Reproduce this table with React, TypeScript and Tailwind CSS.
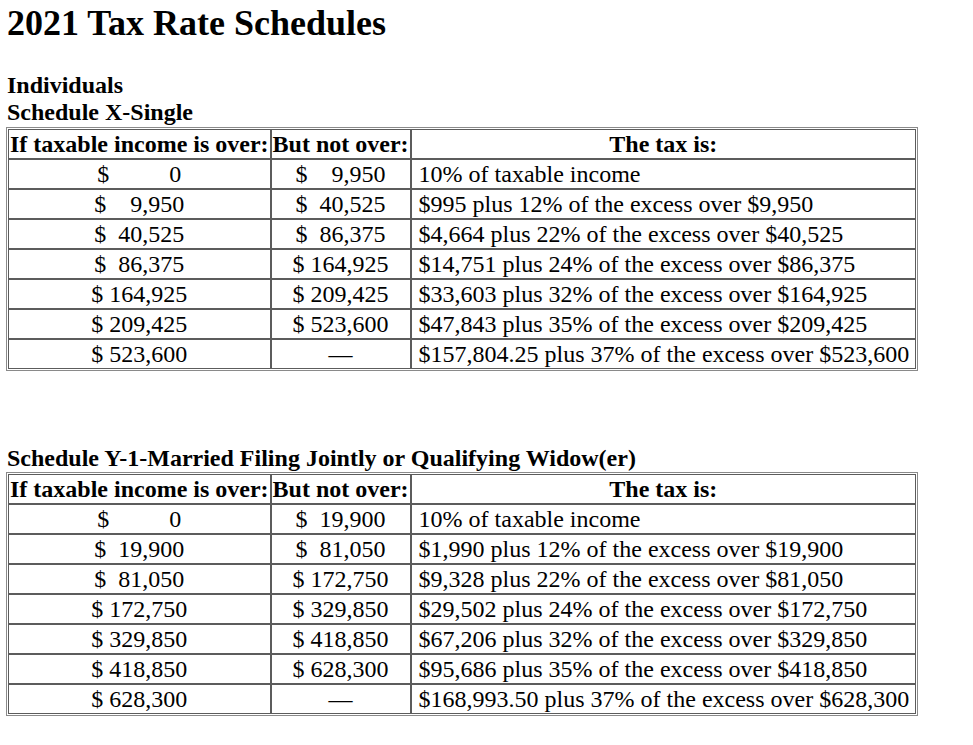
const sp = (n: number) => '\u00a0'.repeat(n);

type Row = [string, string, string];

const single: Row[] = [
  ['$' + sp(10) + '0', '$' + sp(4) + '9,950', '10% of taxable income'],
  ['$' + sp(4) + '9,950', '$' + sp(2) + '40,525', '$995 plus 12% of the excess over $9,950'],
  ['$' + sp(2) + '40,525', '$' + sp(2) + '86,375', '$4,664 plus 22% of the excess over $40,525'],
  ['$' + sp(2) + '86,375', '$ 164,925', '$14,751 plus 24% of the excess over $86,375'],
  ['$ 164,925', '$ 209,425', '$33,603 plus 32% of the excess over $164,925'],
  ['$ 209,425', '$ 523,600', '$47,843 plus 35% of the excess over $209,425'],
  ['$ 523,600', '—', '$157,804.25 plus 37% of the excess over $523,600'],
];

const joint: Row[] = [
  ['$' + sp(10) + '0', '$' + sp(2) + '19,900', '10% of taxable income'],
  ['$' + sp(2) + '19,900', '$' + sp(2) + '81,050', '$1,990 plus 12% of the excess over $19,900'],
  ['$' + sp(2) + '81,050', '$ 172,750', '$9,328 plus 22% of the excess over $81,050'],
  ['$ 172,750', '$ 329,850', '$29,502 plus 24% of the excess over $172,750'],
  ['$ 329,850', '$ 418,850', '$67,206 plus 32% of the excess over $329,850'],
  ['$ 418,850', '$ 628,300', '$95,686 plus 35% of the excess over $418,850'],
  ['$ 628,300', '—', '$168,993.50 plus 37% of the excess over $628,300'],
];

function ScheduleTable({ rows }: { rows: Row[] }) {
  const cell = 'border border-[#5c5c5c] p-px leading-[26px] whitespace-nowrap';
  return (
    <table className="w-[912px] border-separate border-spacing-0 border border-[#8a8a8a] p-px">
      <thead>
        <tr>
          <th className={`${cell} w-[261px] font-bold text-center`}>If taxable income is over:</th>
          <th className={`${cell} w-[139px] font-bold text-center`}>But not over:</th>
          <th className={`${cell} font-bold text-center`}>The tax is:</th>
        </tr>
      </thead>
      <tbody>
        {rows.map((r, i) => (
          <tr key={i}>
            <td className={`${cell} text-center`}>{r[0]}</td>
            <td className={`${cell} text-center`}>{r[1]}</td>
            <td className={`${cell} text-left pl-[7px]`}>{r[2]}</td>
          </tr>
        ))}
      </tbody>
    </table>
  );
}

export default function App() {
  return (
    <div className="min-h-screen bg-white text-black pl-[6px] pt-[3px] font-['Liberation_Serif','Times_New_Roman',serif] text-[24px]">
      <h1 className="text-[36px] font-bold leading-[40px] pl-px">2021 Tax Rate Schedules</h1>

      <div className="mt-[29px] font-bold leading-[27px] pl-px">
        <div>Individuals</div>
        <div>Schedule X-Single</div>
      </div>
      <div className="mt-px">
        <ScheduleTable rows={single} />
      </div>

      <div className="mt-[74px] font-bold leading-[27px] pl-px">
        Schedule Y-1-Married Filing Jointly or Qualifying Widow(er)
      </div>
      <ScheduleTable rows={joint} />
    </div>
  );
}
